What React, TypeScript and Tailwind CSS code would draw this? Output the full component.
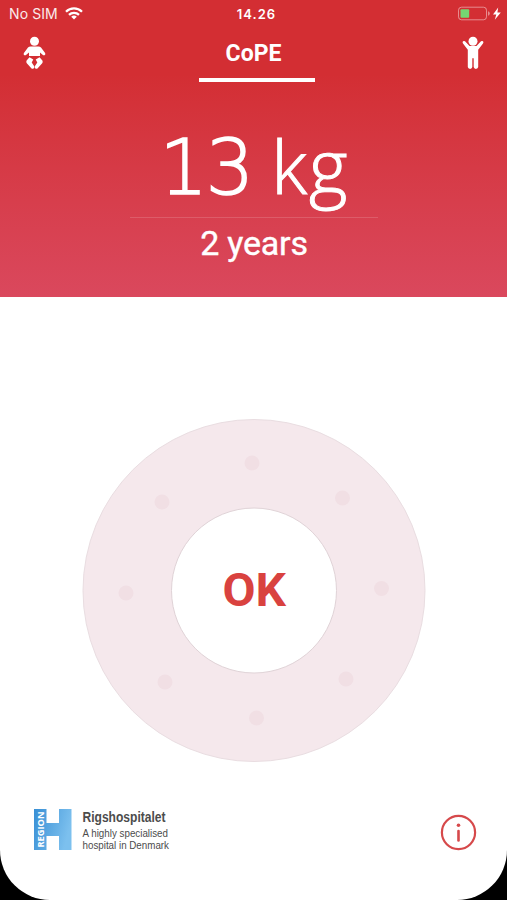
const dots = [
  [252, 463],
  [342.5, 498],
  [381.5, 588.5],
  [346, 679],
  [256.5, 718],
  [165, 682],
  [126, 593],
  [162, 502],
]

const StatusBar = () => (
  <div className="flex h-7 items-center justify-between pl-[9px] pr-[5px] font-['Inter',sans-serif] text-white">
    <div className="flex w-[120px] items-center gap-[7px]">
      <span className="whitespace-nowrap text-[14px] leading-none tracking-[0.1px] opacity-90">No SIM</span>
      <svg width="18" height="13" viewBox="0 0 18 13" fill="none" stroke="white" strokeWidth="2.3" className="-mt-[2px]">
        <path d="M1 4.7a11.4 11.4 0 0 1 16 0" />
        <path d="M4 7.8a7.2 7.2 0 0 1 10 0" />
        <path d="M9 12.5 6.2 9.8a4 4 0 0 1 5.6 0Z" fill="white" stroke="none" />
      </svg>
    </div>
    <span className="pl-[2px] text-[13px] font-semibold leading-none tracking-[1px]">14.26</span>
    <div className="flex w-[120px] items-center justify-end">
      <svg width="46" height="16" viewBox="0 0 46 16">
        <rect x="2.5" y="1.2" width="28" height="12.6" rx="3" fill="none" stroke="white" strokeOpacity=".45" />
        <rect x="4.5" y="3.2" width="8.7" height="8.6" rx="1" fill="#75d672" />
        <path d="M32 5.3q1.800.4 1.800 2.200T32 9.700Z" fill="white" fillOpacity=".45" />
        <path d="M42.200 1.500 37 8.500h3.300l-1.500 5.200 6-7.200h-3.400Z" fill="white" />
      </svg>
    </div>
  </div>
)

const BabyIcon = () => (
  <svg width="23" height="34" viewBox="0 0 23 34" fill="white">
    <circle cx="11.500" cy="5.300" r="4.500" />
    <path d="M7.500 10.500h8q1.500 0 2.500 1.100l4.100 5.400q.8 1.500-.5 2.200-1.200.4-2-.5L17 16.500v3.400H6v-3.400l-2.700 2.200q-.8.900-2 .5-1.200-.7-.4-2.200L5 11.600q1-1.100 2.500-1.100Z" />
    <path d="M6.500 21.200 10.300 23.600l-1.600 3 2.500 3.600q.5 1.500-.6 2.300-1.200.8-2.300-.2L3.600 27q-.6-1.200 0-2.400Z" />
    <path d="M16.500 21.200 12.700 23.600l1.600 3-2.500 3.600q-.5 1.500.6 2.300 1.200.8 2.300-.2l4.700-5.300q.6-1.200 0-2.400Z" />
  </svg>
)

const ChildIcon = () => (
  <svg width="22" height="34" viewBox="0 0 22 34" fill="white">
    <circle cx="11" cy="5.300" r="4.500" />
    <path d="M3 5.300 7.500 9.900h7L19 5.300q1-.8 2 0 .9.900 0 2.200l-4.800 6.200v17.300q-.2 1.700-2.300 1.900-2-.2-2.200-1.900v-8.800h-1.400v8.800q-.2 1.700-2.200 1.900-2.100-.2-2.300-1.900V13.700L1 7.500q-.9-1.300 0-2.200 1-.8 2 0Z" />
  </svg>
)

const Header = () => (
  <header className="h-[297px] bg-linear-to-b from-[#d32e33] from-25% to-[#da485d] text-white">
    <StatusBar />
    <nav className="flex h-[55px] items-start justify-between pl-[23px] pr-[23px] pt-2">
      <BabyIcon />
      <div className="ml-[5px] flex w-[116px] flex-col items-center border-b-4 border-white pb-[8px]">
        <h1 className="mt-[2px] pr-[6px] font-['Roboto',sans-serif] text-[23px] font-bold leading-8">CoPE</h1>
      </div>
      <ChildIcon />
    </nav>
    <div className="mx-auto flex w-[248px] flex-col">
      <div className="flex h-[135px] items-end justify-center whitespace-pre border-b border-white/15 pb-[9px] pl-[2px] leading-[80px]">
        <span className="font-['DejaVu_Sans',sans-serif] text-[76px] font-extralight tracking-[-2px] [-webkit-text-stroke:1.6px_white]">13</span>
        <span className="mb-[2px] ml-[19px] font-['Open_Sans',sans-serif] text-[74px] font-light tracking-[2px] [-webkit-text-stroke:1px_white]">kg</span>
      </div>
      <p className="mt-[5px] pl-[1px] text-center font-['Roboto',sans-serif] text-[34px] leading-10 tracking-[-0.2px] [-webkit-text-stroke:0.4px_white]">2 years</p>
    </div>
  </header>
)

const Wheel = () => (
  <svg width="507" height="350" viewBox="0 415 507 350" className="block">
    <circle cx="254" cy="590.500" r="171" fill="#f5e8ec" stroke="#e9dde1" />
    <circle cx="254" cy="590.500" r="82.500" fill="white" stroke="#e0d3d7" />
    {dots.map(([x, y]) => (
      <circle key={`${x}-${y}`} cx={x} cy={y} r="7.500" fill="#f1dfe4" />
    ))}
    <text
      x="222.500"
      y="606"
      textLength="63.500"
      lengthAdjust="spacingAndGlyphs"
      fill="#d9423f"
      className="font-['Roboto',sans-serif] text-[46px] font-bold"
    >
      OK
    </text>
  </svg>
)

const HospitalLogo = () => (
  <svg width="150" height="45" viewBox="0 0 150 45">
    <defs>
      <linearGradient id="region" x1="0" y1="0" x2="1" y2="0.3">
        <stop offset="0" stopColor="#388fd5" />
        <stop offset="1" stopColor="#7cc0ee" />
      </linearGradient>
    </defs>
    <path d="M0 0h12.500v14H25V0h12.500v41H25V27H12.500v14H0Z" fill="url(#region)" />
    <text
      transform="translate(9.700 38.500) rotate(-90)"
      textLength="36"
      lengthAdjust="spacingAndGlyphs"
      fill="white"
      className="font-['Open_Sans',sans-serif] text-[9.500px] font-bold"
    >
      REGION
    </text>
    <g className="font-['Liberation_Sans',sans-serif]" fill="#4c4c4c">
      <text x="48.500" y="13" textLength="83" lengthAdjust="spacingAndGlyphs" className="text-[14.500px] font-bold">
        Rigshospitalet
      </text>
      <text x="48.500" y="28" textLength="85.500" lengthAdjust="spacingAndGlyphs" className="text-[10.500px]">
        A highly specialised
      </text>
      <text x="48.500" y="40" textLength="86.500" lengthAdjust="spacingAndGlyphs" className="text-[10.500px]">
        hospital in Denmark
      </text>
    </g>
  </svg>
)

const Footer = () => (
  <footer className="flex items-start justify-between pl-[34px] pr-[30px]">
    <HospitalLogo />
    <svg width="37" height="37" viewBox="0 0 37 37" className="mt-[5px]">
      <circle cx="18.500" cy="18.500" r="16.600" fill="none" stroke="#d6494b" strokeWidth="2.200" />
      <circle cx="18.500" cy="11.200" r="1.800" fill="#d6494b" />
      <path d="M18.500 17v9.500" stroke="#d6494b" strokeWidth="2.600" strokeLinecap="round" />
    </svg>
  </footer>
)

export default function App() {
  return (
    <div className="h-[900px] w-[507px] bg-black">
      <div className="flex h-full flex-col overflow-hidden rounded-b-[50px] bg-white">
        <Header />
        <main className="mt-[118px]">
          <Wheel />
        </main>
        <div className="mt-[44px]">
          <Footer />
        </div>
      </div>
    </div>
  )
}
